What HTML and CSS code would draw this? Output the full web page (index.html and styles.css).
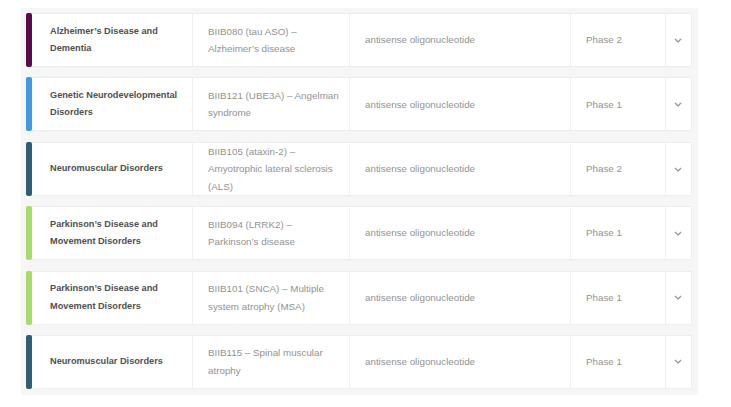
FILE: index.html
```html
<!DOCTYPE html>
<html lang="en">
<head>
<meta charset="utf-8">
<title>Pipeline</title>
<link rel="stylesheet" href="styles.css">
</head>
<body>
<div class="panel">
  <div class="card">
    <div class="bar purple"></div>
    <div class="cell area">Alzheimer’s Disease and<br>Dementia</div>
    <div class="cell">BIIB080 (tau ASO) –<br>Alzheimer’s disease</div>
    <div class="cell">antisense oligonucleotide</div>
    <div class="cell">Phase 2</div>
    <div class="cell chev"><svg viewBox="0 0 8 5" width="8" height="5"><path d="M1 1l3 3 3-3" fill="none" stroke="#8f8f8f" stroke-width="1.2"/></svg></div>
  </div>
  <div class="card">
    <div class="bar blue"></div>
    <div class="cell area">Genetic Neurodevelopmental<br>Disorders</div>
    <div class="cell">BIIB121 (UBE3A) – Angelman<br>syndrome</div>
    <div class="cell">antisense oligonucleotide</div>
    <div class="cell">Phase 1</div>
    <div class="cell chev"><svg viewBox="0 0 8 5" width="8" height="5"><path d="M1 1l3 3 3-3" fill="none" stroke="#8f8f8f" stroke-width="1.2"/></svg></div>
  </div>
  <div class="card">
    <div class="bar teal"></div>
    <div class="cell area">Neuromuscular Disorders</div>
    <div class="cell">BIIB105 (ataxin-2) –<br>Amyotrophic lateral sclerosis<br>(ALS)</div>
    <div class="cell">antisense oligonucleotide</div>
    <div class="cell">Phase 2</div>
    <div class="cell chev"><svg viewBox="0 0 8 5" width="8" height="5"><path d="M1 1l3 3 3-3" fill="none" stroke="#8f8f8f" stroke-width="1.2"/></svg></div>
  </div>
  <div class="card">
    <div class="bar green"></div>
    <div class="cell area">Parkinson’s Disease and<br>Movement Disorders</div>
    <div class="cell">BIIB094 (LRRK2) –<br>Parkinson’s disease</div>
    <div class="cell">antisense oligonucleotide</div>
    <div class="cell">Phase 1</div>
    <div class="cell chev"><svg viewBox="0 0 8 5" width="8" height="5"><path d="M1 1l3 3 3-3" fill="none" stroke="#8f8f8f" stroke-width="1.2"/></svg></div>
  </div>
  <div class="card">
    <div class="bar green"></div>
    <div class="cell area">Parkinson’s Disease and<br>Movement Disorders</div>
    <div class="cell">BIIB101 (SNCA) – Multiple<br>system atrophy (MSA)</div>
    <div class="cell">antisense oligonucleotide</div>
    <div class="cell">Phase 1</div>
    <div class="cell chev"><svg viewBox="0 0 8 5" width="8" height="5"><path d="M1 1l3 3 3-3" fill="none" stroke="#8f8f8f" stroke-width="1.2"/></svg></div>
  </div>
  <div class="card">
    <div class="bar teal"></div>
    <div class="cell area">Neuromuscular Disorders</div>
    <div class="cell">BIIB115 – Spinal muscular<br>atrophy</div>
    <div class="cell">antisense oligonucleotide</div>
    <div class="cell">Phase 1</div>
    <div class="cell chev"><svg viewBox="0 0 8 5" width="8" height="5"><path d="M1 1l3 3 3-3" fill="none" stroke="#8f8f8f" stroke-width="1.2"/></svg></div>
  </div>
</div>
</body>
</html>
```

FILE: styles.css
```css
html, body {
  margin: 0;
  padding: 0;
  background: #ffffff;
}
body {
  padding: 8px 0 0 21px;
  font-family: "Liberation Sans", Arial, sans-serif;
  font-size: 9.8px;
  color: #929292;
}
.panel {
  width: 677px;
  box-sizing: border-box;
  background: #f6f6f6;
  padding: 5px 6px 6px 5px;
  display: flex;
  flex-direction: column;
  gap: 10.4px;
}
.card {
  display: grid;
  grid-template-columns: 6px 160px 157px 221px 95px 1fr;
  height: 54px;
  background: #ffffff;
  border: 1px solid #ededed;
  border-left: none;
  border-radius: 2px;
  box-sizing: border-box;
}
.bar {
  border-radius: 2px;
  margin: -1px 0;
}
.purple { background: #5a0a4e; }
.blue { background: #3f9be0; }
.teal { background: #2f5d76; }
.green { background: #a6dc6c; }
.cell {
  display: flex;
  align-items: center;
  padding: 0 8px 0 15px;
  line-height: 17.5px;
  border-left: 1px solid #efefef;
}
.cell.area {
  border-left: none;
  padding-left: 18px;
  font-size: 9.2px;
  font-weight: bold;
  color: #505050;
}
.cell.chev {
  padding: 0 2px 0 0;
  justify-content: center;
}
```
